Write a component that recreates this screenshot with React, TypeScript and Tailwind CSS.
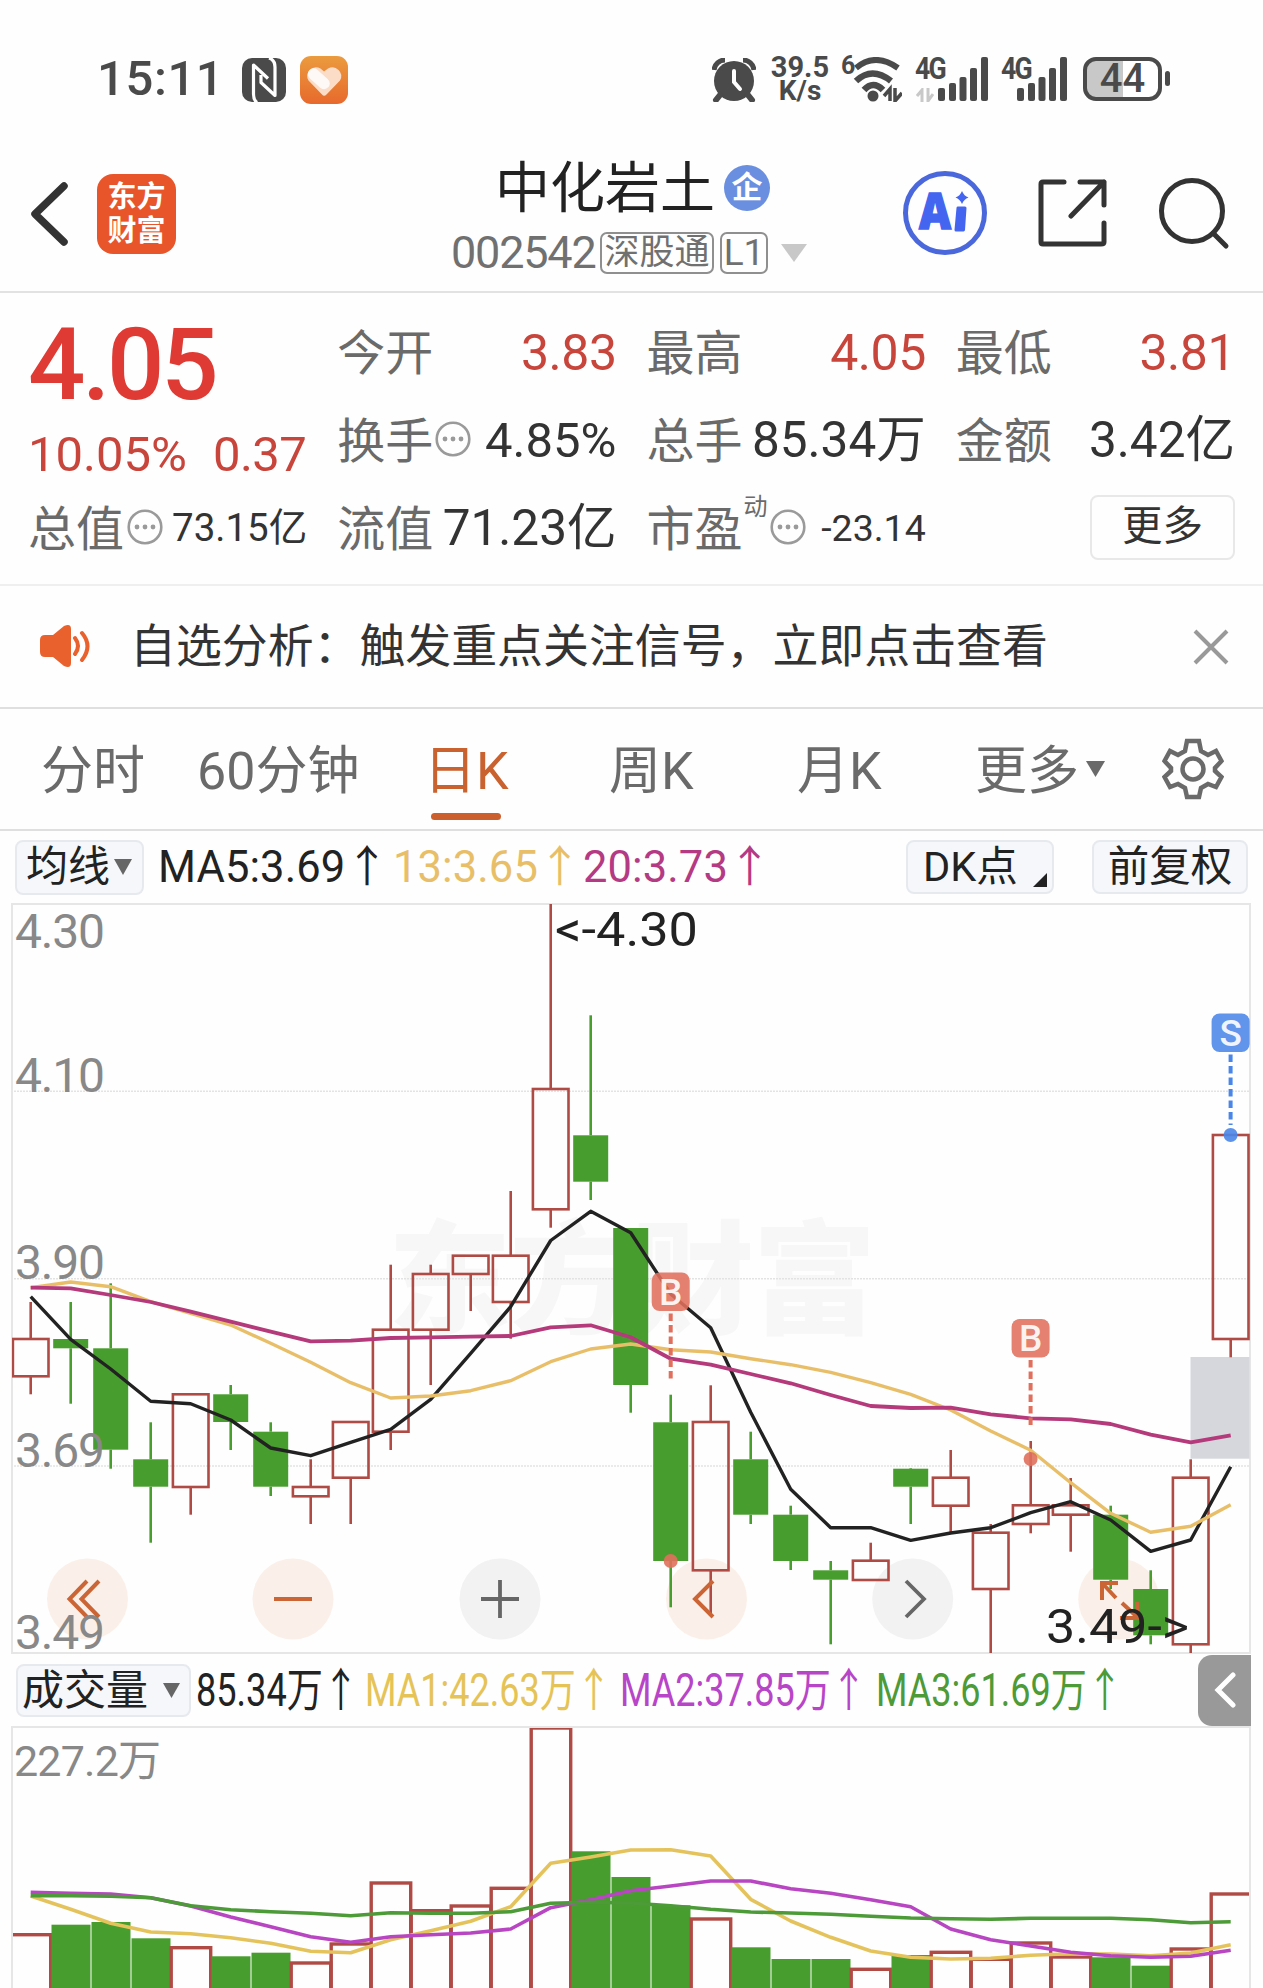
import React from 'react';

type Candle = [up: boolean, high: number, top: number, bottom: number, low: number];

const RED = '#b04a45';
const GREEN = '#479d2d';
const STEP = 40;
const X0 = 18.7;
const cx = (i: number) => X0 + i * STEP;

// Price chart starts at this page offset, all prices below are in the same scale
const K_TOP = 903;
const V_TOP = 1726;

const candles: Candle[] = [
  [true, 1302, 1339, 1376.3, 1394.3],
  [false, 1302, 1339, 1348.3, 1403.7],
  [false, 1283.3, 1348.3, 1449.7, 1468.7],
  [false, 1422.3, 1459.3, 1486.7, 1542.7],
  [true, 1394.3, 1394.3, 1487, 1514.7],
  [false, 1385, 1394.3, 1422, 1450],
  [false, 1422.3, 1431.7, 1486.7, 1496],
  [true, 1459.3, 1487, 1496.3, 1524],
  [true, 1422, 1422, 1477.7, 1524],
  [true, 1264.7, 1329.7, 1431.7, 1450],
  [true, 1264.7, 1274, 1329.7, 1385],
  [true, 1255.7, 1255.7, 1274, 1311],
  [true, 1191, 1255.7, 1302, 1338.7],
  [true, 904, 1089, 1209.3, 1227.7],
  [false, 1015.3, 1135.3, 1181.7, 1200],
  [false, 1228, 1228, 1385, 1412.7],
  [false, 1394.7, 1422.3, 1561, 1607.3],
  [true, 1385.3, 1422, 1570.3, 1616],
  [false, 1431.7, 1459.3, 1514.7, 1524],
  [false, 1505.7, 1514.7, 1561, 1570],
  [false, 1561, 1570.3, 1579.7, 1644.3],
  [true, 1542.7, 1560.7, 1580, 1580],
  [false, 1468, 1468.7, 1486.7, 1524],
  [true, 1450, 1477.7, 1505.7, 1532.3],
  [true, 1524, 1532.7, 1589, 1653],
  [true, 1441, 1505.3, 1524, 1533.3],
  [true, 1478, 1505.3, 1514.7, 1551.7],
  [false, 1505.7, 1514.7, 1579.7, 1589],
  [false, 1570.3, 1589, 1635.3, 1644.3],
  [true, 1459.3, 1477.7, 1644.3, 1653],
  [true, 1135, 1135, 1339, 1357.3],
];

const ma5 = [
  1296.7, 1339.3, 1369, 1401.3, 1403.7, 1420, 1448, 1455.7, 1442.3, 1429.3, 1399.3, 1353.3, 1306.7, 1240.5, 1211.3, 1232.7,
  1294, 1327.7, 1412.3, 1489.3, 1527.7, 1527.7, 1540.3, 1533, 1527.7, 1512.7, 1501.7, 1520, 1551.3, 1540, 1466.7,
];
const ma13 = [
  1287.7, 1282, 1286.7, 1301.7, 1313.3, 1325, 1343.3, 1362.3, 1382.7, 1398, 1396, 1390.7, 1380.7, 1361.7, 1349, 1344,
  1349.7, 1352, 1358.7, 1364.7, 1372.3, 1382.7, 1394.3, 1410, 1431, 1450.3, 1482.7, 1513.3, 1532.3, 1526.3, 1504.7,
];
const ma20 = [
  1287.7, 1288.3, 1295, 1302, 1311.7, 1321.7, 1331.7, 1341.3, 1340.7, 1338, 1337.3, 1336.7, 1336, 1327.3, 1325.3, 1337.3,
  1358.7, 1364.7, 1374, 1383.3, 1395, 1406, 1408, 1407.7, 1414.3, 1418.3, 1419.3, 1424, 1434.7, 1442.3, 1435.3,
];

const volumes = [
  1934.7, 1924.7, 1922, 1938.3, 1947.7, 1956.3, 1952.7, 1963, 1944, 1883, 1910.7, 1906, 1888.3, 1728, 1851.3, 1877, 1905.3,
  1919, 1947.3, 1959, 1959, 1969.3, 1955, 1952.3, 1959.3, 1943, 1957, 1957.3, 1965.7, 1949, 1894,
];
const volMa1 = [
  1896, 1909.3, 1923.3, 1932, 1933.7, 1937.7, 1943.3, 1951.3, 1952.7, 1939.7, 1930.7, 1921.3, 1906.7, 1863.3, 1857, 1850,
  1849.7, 1856, 1899.3, 1921, 1937.3, 1951, 1957.3, 1959, 1958.3, 1955.3, 1953.7, 1954, 1955.7, 1953, 1944.7,
];
const volMa2 = [
  1892.3, 1893.3, 1894, 1897.7, 1906, 1917, 1926.7, 1936.7, 1942.3, 1936.7, 1934.7, 1933, 1929, 1907.7, 1899.7, 1890.7,
  1886, 1881, 1881, 1888.7, 1893.3, 1899.7, 1906.7, 1929, 1939.7, 1946, 1952.3, 1955.7, 1957.3, 1956.3, 1950.3,
];
const volMa3 = [
  1895.7, 1895.7, 1896.3, 1897.7, 1905.7, 1909.7, 1911.7, 1913.3, 1915.7, 1912.7, 1913.3, 1913.3, 1911.7, 1903.3, 1902.3,
  1903, 1905.7, 1909.3, 1912, 1913, 1914.3, 1916.3, 1918, 1918.7, 1919.3, 1918.3, 1918.3, 1918.3, 1919.7, 1922.7, 1921.7,
];

const line = (ys: number[], top: number) => ys.map((y, i) => `${cx(i)},${(y - top).toFixed(1)}`).join(' ');

const SignalBars = () => (
  <svg width="50" height="44" viewBox="0 0 50 44" fill="#4a4a4a">
    <rect x="0" y="31" width="7" height="13" rx="2" />
    <rect x="11" y="26" width="7" height="18" rx="2" />
    <rect x="21.5" y="20" width="7" height="24" rx="2" />
    <rect x="32" y="11" width="7" height="33" rx="2" />
    <rect x="43" y="0" width="7" height="44" rx="2" />
  </svg>
);

const StatusBar = () => (
  <div className="flex h-[120px] items-start pt-[56px] text-[#4a4a4a]">
    <span className="ml-[97px] w-[145px] text-[49px] font-medium leading-[45px] tracking-[0.6px]">15:11</span>
    <svg className="mt-[2px]" width="44" height="44" viewBox="0 0 44 44">
      <rect width="44" height="44" rx="10" fill="#4a4a4a" />
      <g fill="none" stroke="#fff" strokeWidth="3.2" strokeLinejoin="round">
        <path d="M15 44.500 Q11.500 42 11.500 36 V7 L26 20.500" />
        <path d="M27 0 Q33 2 33 9 V37.500 L19 24.500 V17" />
      </g>
    </svg>
    <svg className="ml-[14px]" width="48" height="48" viewBox="0 0 48 48">
      <defs>
        <linearGradient id="health" x1="0" y1="0" x2="0" y2="1">
          <stop offset="0" stopColor="#eb9b3e" />
          <stop offset="1" stopColor="#e7692c" />
        </linearGradient>
      </defs>
      <rect width="48" height="48" rx="11" fill="url(#health)" />
      <path
        d="M22 38.500 L8.500 24.500 A8.800 8.800 0 0 1 20.500 12.500 L24 15.500 L28 12.500 A8.800 8.800 0 0 1 40 24.500 L26.500 38.500 Q24 41 22 38.500 Z"
        fill="#fbdcc6"
      />
      <path d="M13.500 18 L24 27.500" stroke="#fff" strokeWidth="11.500" strokeLinecap="round" opacity=".85" />
    </svg>

    {/* right side indicators */}
    <svg className="ml-[364px] mt-[2px]" width="44" height="44" viewBox="0 0 44 44">
      <circle cx="22" cy="23" r="20" fill="#4a4a4a" />
      <path d="M2 12 A11 11 0 0 1 13 2 M42 12 A11 11 0 0 0 31 2" fill="none" stroke="#4a4a4a" strokeWidth="5" />
      <path d="M8 37 L4 42 M36 37 L40 42" stroke="#4a4a4a" strokeWidth="6" strokeLinecap="round" />
      <path d="M22 13 V24 L28 31" fill="none" stroke="#fff" strokeWidth="4" strokeLinecap="round" />
    </svg>
    <div className="ml-[13px] flex w-[62px] flex-col items-center text-[29px] font-bold leading-[23px]">
      <span>39.5</span>
      <span className="text-[28px]">K/s</span>
    </div>
    <span className="ml-[10px] w-[12px] text-[25px] font-bold leading-[19px]">6</span>
    <svg className="mt-[1px]" width="49" height="45" viewBox="0 0 49 45">
      <g fill="none" stroke="#4a4a4a" strokeWidth="6">
        <path d="M3 11 Q22 -5 45 11" />
        <path d="M3 24 Q19 9 38 24" strokeWidth="6.5" />
        <path d="M11 33 Q20 23 30 33" strokeWidth="6.5" />
      </g>
      <circle cx="20" cy="39" r="5.5" fill="#4a4a4a" />
      <path d="M37 44 V32 L31 39 M42 31 V44 L49 36" fill="none" stroke="#4a4a4a" strokeWidth="3.5" />
    </svg>
    <div className="relative ml-[13px] mt-[1px] flex w-[73px] justify-end">
      <span className="absolute left-0 top-0 text-[31px] font-bold leading-[24px] tracking-[-2px] origin-left scale-x-[0.860]">4G</span>
      <svg className="absolute left-[1px] top-[31px]" width="18" height="14" viewBox="0 0 18 14">
        <path d="M6 14 V2 L1 8 M12 0 V13 L17 6" fill="none" stroke="#c8c8c8" strokeWidth="3" />
      </svg>
      <SignalBars />
    </div>
    <div className="relative ml-[13px] mt-[1px] flex w-[66px] justify-end">
      <span className="absolute left-0 top-0 text-[31px] font-bold leading-[24px] tracking-[-2px] origin-left scale-x-[0.860]">4G</span>
      <SignalBars />
    </div>
    <div className="ml-[16px] mt-[1px] flex h-[44px] w-[79px] items-center justify-center rounded-[13px] border-4 border-[#4a4a4a] bg-linear-to-r from-[#c8c8c8] from-50% to-white to-50% text-[40px] font-medium leading-none">
      44
    </div>
    <div className="ml-[3px] mt-[15px] h-[15px] w-[5px] rounded-full bg-[#4a4a4a]" />
  </div>
);

const Header = () => (
  <header className="flex h-[173px] items-start border-b-2 border-[#e2e2e2]">
    <svg className="ml-[29px] mt-[61px]" width="40" height="66" viewBox="0 0 40 66">
      <path d="M35 5 L6 33 L35 61" fill="none" stroke="#333" strokeWidth="7.500" strokeLinecap="round" strokeLinejoin="round" />
    </svg>
    <div className="ml-[28px] mt-[54px] flex h-[80px] w-[79px] flex-col items-center justify-center rounded-[16px] bg-[#e9552a] text-[29px] font-bold leading-[34px] text-white">
      <span>东方</span>
      <span>财富</span>
    </div>
    <div className="ml-[275px] mt-[38px] w-[362px]">
      <div className="flex items-center">
        <span className="ml-[44px] text-[55px] leading-[60px] text-[#222]">中化岩土</span>
        <span className="mb-[1px] ml-[9px] flex h-[46px] w-[46px] items-center justify-center rounded-full bg-[#6a8fe0] text-[31px] font-bold leading-none text-white">
          企
        </span>
      </div>
      <div className="mt-[12px] flex items-center leading-none text-[#707070]">
        <span className="w-[149px] text-[45px] tracking-[-1.200px]">002542</span>
        <span className="flex h-[42px] w-[114px] items-center justify-center rounded-[7px] border-2 border-[#8f8f8f] text-[35px]">深股通</span>
        <span className="ml-[6px] flex h-[42px] w-[48px] items-center justify-center rounded-[7px] border-2 border-[#8f8f8f] text-[37px]">L1</span>
        <svg className="ml-[13px]" width="26" height="18" viewBox="0 0 26 18">
          <path d="M0 0 H26 L13 18 Z" fill="#c8c8c8" />
        </svg>
      </div>
    </div>
    <div className="relative ml-[90px] mt-[51px] flex h-[84px] w-[84px] items-center justify-center rounded-full border-[5px] border-[#4a68dc]">
      <svg width="74" height="74" viewBox="0 0 74 74">
        <text x="11" y="53" fontFamily="Open Sans" fontSize="49" fontWeight="800" fill="#4465f0" stroke="#4465f0" strokeWidth="1.500" textLength="32" lengthAdjust="spacingAndGlyphs">
          A
        </text>
        <path d="M50 32 H57 L55.500 54 H48 Z" fill="#4465f0" stroke="#4465f0" strokeWidth="3" strokeLinejoin="round" />
        <path d="M54 15 Q56 20 60.500 21.500 Q56 23 54 28 Q52 23 47.500 21.500 Q52 20 54 15Z" fill="#4465f0" />
      </svg>
    </div>
    <svg className="ml-[50px] mt-[58px]" width="70" height="70" viewBox="0 0 70 70" fill="none" stroke="#333" strokeWidth="5" strokeLinecap="round" strokeLinejoin="round">
      <path d="M27 4 H6 Q4 4 4 6 V64 Q4 66 6 66 H64 Q67 66 67 64 V45" />
      <path d="M43 4 H67 V27 M67 4 L34 38" />
    </svg>
    <svg className="ml-[51px] mt-[57px]" width="74" height="74" viewBox="0 0 74 74" fill="none" stroke="#333" strokeWidth="5" strokeLinecap="round">
      <circle cx="34" cy="34" r="30.500" />
      <path d="M55 56 L68 69" />
    </svg>
  </header>
);

const Dots = ({ className = '' }: { className?: string }) => (
  <svg className={className} width="36" height="36" viewBox="0 0 36 36">
    <circle cx="18" cy="18" r="16.300" fill="none" stroke="#9a9a9a" strokeWidth="2.600" />
    <g fill="#9a9a9a">
      <circle cx="10" cy="18" r="2.400" />
      <circle cx="18" cy="18" r="2.400" />
      <circle cx="26" cy="18" r="2.400" />
    </g>
  </svg>
);

const Label = ({ children }: { children: React.ReactNode }) => <span className="pt-[5px] text-[48px] text-[#6a6a6a]">{children}</span>;

const Quote = () => (
  <section className="grid h-[293px] grid-cols-4 grid-rows-[repeat(3,88px)] gap-x-[30px] border-b-2 border-[#efefef] pl-[28px] pr-[28px] pt-[14px] leading-none whitespace-nowrap text-[#333]">
    <div className="row-span-2 text-[#c8453c]">
      <div className="mt-[8px] text-[101px] font-medium leading-[100px] tracking-[-3.200px] text-[#df3a33]">4.05</div>
      <div className="mt-[15px] flex justify-between pr-[1px] text-[49px]">
        <span>10.05%</span>
        <span className="tracking-[-0.600px]">0.37</span>
      </div>
    </div>
    <div className="flex items-center justify-between">
      <Label>今开</Label>
      <span className="pt-[3px] text-[50px] tracking-[-0.500px] text-[#c8453c]">3.83</span>
    </div>
    <div className="flex items-center justify-between">
      <Label>最高</Label>
      <span className="pt-[3px] text-[50px] tracking-[-0.500px] text-[#c8453c]">4.05</span>
    </div>
    <div className="flex items-center justify-between">
      <Label>最低</Label>
      <span className="pt-[3px] text-[50px] tracking-[-0.500px] text-[#c8453c]">3.81</span>
    </div>
    <div className="flex items-center">
      <Label>换手</Label>
      <Dots className="ml-[2px]" />
      <span className="ml-auto pt-[3px] text-[49px]">4.85%</span>
    </div>
    <div className="flex items-center justify-between">
      <Label>总手</Label>
      <span className="pt-[4px] text-[49.500px]">85.34万</span>
    </div>
    <div className="flex items-center justify-between">
      <Label>金额</Label>
      <span className="pt-[4px] text-[49.500px]">3.42亿</span>
    </div>
    <div className="flex items-center">
      <Label>总值</Label>
      <Dots className="ml-[3px]" />
      <span className="ml-auto pt-[3px] text-[38.500px]">73.15亿</span>
    </div>
    <div className="flex items-center justify-between">
      <Label>流值</Label>
      <span className="pt-[3px] text-[49.500px]">71.23亿</span>
    </div>
    <div className="flex items-center">
      <Label>市盈</Label>
      <span className="mb-[40px] ml-[1px] text-[24px] text-[#6a6a6a]">动</span>
      <Dots className="ml-[2px]" />
      <span className="ml-auto pt-[3px] text-[37.500px]">-23.14</span>
    </div>
    <div className="flex items-center justify-end">
      <button className="h-[65px] w-[145px] rounded-[8px] border-2 border-[#e8e8e8] pb-[1px] text-[40.500px]">更多</button>
    </div>
  </section>
);

const Notice = () => (
  <div className="flex h-[123px] items-center border-b-2 border-[#dfdfdf] text-[#333]">
    <svg className="ml-[39px] mb-[2px]" width="53" height="44" viewBox="0 0 53 44">
      <path d="M1 16 Q1 11 6 11 H14 L25 2 Q32 -1 32 5 V39 Q32 45 25 42 L14 33 H6 Q1 33 1 28 Z" fill="#e9622e" />
      <path d="M36 14 Q42 22 36 30 M43 9 Q54 22 43 36" fill="none" stroke="#e9622e" strokeWidth="4" strokeLinecap="round" />
    </svg>
    <span className="ml-[38px] text-[45.900px] leading-none whitespace-nowrap">自选分析：触发重点关注信号，立即点击查看</span>
    <svg className="ml-auto mr-[34px]" width="36" height="36" viewBox="0 0 36 36">
      <path d="M2 2 L34 34 M34 2 L2 34" stroke="#999" strokeWidth="4" />
    </svg>
  </div>
);

const Tabs = () => (
  <nav className="flex h-[122px] items-center border-b-2 border-[#dfdfdf] text-[52px] leading-none whitespace-nowrap text-[#6a6a6a]">
    <span className="ml-[41px] w-[156px] pt-[5px]">分时</span>
    <span className="w-[227px] pt-[5px]">60分钟</span>
    <span className="relative w-[185px] pt-[5px] text-[#c9622f]">
      日K
      <i className="absolute left-[7px] top-[72px] h-[7px] w-[70px] rounded-full bg-[#cc5f2e]" />
    </span>
    <span className="w-[188px] pt-[5px]">周K</span>
    <span className="w-[178px] pt-[5px]">月K</span>
    <span className="w-[111px] pt-[5px]">更多</span>
    <svg width="19" height="16" viewBox="0 0 19 16">
      <path d="M0 0 H19 L9.500 16 Z" fill="#6a6a6a" />
    </svg>
    <svg className="ml-[57px]" width="62" height="62" viewBox="0 0 62 62" fill="none" stroke="#6a6a6a" strokeWidth="4.500">
      <path d="M25 3 H37 L39 13 L46 17 L54 13 L59.500 23 L53 30 V33 L59.500 39 L54 49 L46 46 L39 50 L37 59 H25 L23 50 L16 46 L8 49 L2.500 39 L9 33 V30 L2.500 23 L8 13 L16 17 L23 13 Z" />
      <circle cx="31" cy="31" r="10.500" />
    </svg>
  </nav>
);

const btn = 'flex items-center rounded-[8px] border-2 border-[#e6e9ee] bg-[#f5f7fa] text-[#222]';

const MaRow = () => (
  <div className="flex h-[72px] items-center leading-none whitespace-nowrap">
    <div className={`${btn} ml-[15px] h-[55px] w-[129px] pl-[9px] text-[42px]`}>
      均线
      <svg className="ml-[4px]" width="18" height="16" viewBox="0 0 18 16">
        <path d="M0 0 H18 L9 16 Z" fill="#666" />
      </svg>
    </div>
    <span className="ml-[14px] w-[235px] pt-[2px] text-[43.500px] tracking-[0.100px] text-[#222]">MA5:3.69↑</span>
    <span className="w-[190px] pt-[2px] text-[43.500px] tracking-[0.100px] text-[#e8bf68]">13:3.65↑</span>
    <span className="pt-[2px] text-[43.500px] tracking-[0.100px] text-[#b53a84]">20:3.73↑</span>
    <div className={`${btn} relative ml-auto h-[54px] w-[148px] pl-[15px] text-[41.500px]`}>
      DK点
      <svg className="absolute bottom-[5px] right-[5px]" width="14" height="14" viewBox="0 0 14 14">
        <path d="M14 0 V14 H0 Z" fill="#222" />
      </svg>
    </div>
    <div className={`${btn} ml-[38px] mr-[15px] h-[54px] w-[156px] justify-center text-[41.500px]`}>前复权</div>
  </div>
);

const Marker = ({ x, y, letter, color, dashTo, dotY }: { x: number; y: number; letter: string; color: string; dashTo: number; dotY: number }) => (
  <g>
    <path d={`M${x} ${y + 41} V${dashTo}`} stroke={color} strokeWidth="4" strokeDasharray="7.500 4" />
    <rect x={x - 19} y={y} width="38" height="38.500" rx="8" fill={color} fillOpacity=".88" />
    <text x={x} y={y + 32} textAnchor="middle" fill="#fff" fillOpacity=".92" fontSize="37" fontWeight="500">
      {letter}
    </text>
    <circle cx={x} cy={dotY} r="7" fill={color} fillOpacity=".9" />
  </g>
);

const KChart = () => (
  <div className="relative ml-[11px] h-[751px] w-[1240px] border-2 border-[#e6e6e6]">
    <svg className="absolute -left-[1px] -top-[2px]" width="1239" height="752" viewBox="0 0 1239 752">
      <text x="376" y="421" fontSize="123" fontWeight="900" fill="#f7f7f7" textLength="488">
        东方财富
      </text>
      {[188.300, 375.700, 563].map((y) => (
        <path key={y} d={`M2 ${y} H1237`} stroke="#e3e3e3" strokeWidth="1.500" strokeDasharray="2 1" />
      ))}
      <rect x="1178.500" y={1357 - K_TOP} width="59" height="101.700" fill="#d5d7dd" />
      {[75.500, 281, 488, 694.500, 900.700, 1106.700].map((x, i) => (
        <circle key={x} cx={x} cy="696" r="40.500" fill={i === 2 || i === 4 ? '#f2f2f2' : '#fbf0e9'} />
      ))}

      {candles.map(([up, high, top, bottom, low], i) => {
        const color = up ? RED : GREEN;
        return (
          <g key={i} transform={`translate(0 ${-K_TOP})`} stroke={color} strokeWidth="2.600">
            {high < top && <path d={`M${cx(i)} ${high} V${top}`} />}
            {low > bottom && <path d={`M${cx(i)} ${bottom} V${low}`} />}
            {up ? (
              <rect x={cx(i) - 17.800} y={top} width="35.600" height={bottom - top} fill="none" />
            ) : (
              <rect x={cx(i) - 17.500} y={top} width="35" height={bottom - top} fill={GREEN} stroke="none" />
            )}
          </g>
        );
      })}

      <g fill="none" strokeWidth="3.400" strokeLinejoin="round">
        <polyline points={line(ma5, K_TOP)} stroke="#222" />
        <polyline points={line(ma13, K_TOP)} stroke="#e8bf68" />
        <polyline points={line(ma20, K_TOP)} stroke="#b53a7c" strokeWidth="3.800" />
      </g>

      <Marker x={658.700} y={369.500} letter="B" color="#e0705d" dashTo={478} dotY={658} />
      <Marker x={1018.600} y={416} letter="B" color="#e0705d" dashTo={525} dotY={556} />
      <Marker x={1218.600} y={110.500} letter="S" color="#4a86e8" dashTo={222} dotY={232} />

      {/* zoom and pan controls */}
      <g fill="none" stroke="#cc6535" strokeWidth="4">
        <path d="M75 678 L57.500 696 L75 714 M87 678 L69.500 696 L87 714" />
        <path d="M262 696 H300" />
        <path d="M701 678 L683 696 L701 714" />
        <path d="M1090 697 V680 H1106 M1091 681 L1104 695 M1110 700 L1124 713 M1108 715 H1125 V699" />
      </g>
      <g fill="none" stroke="#666" strokeWidth="3.800">
        <path d="M469 696 H507 M488 677 V715" />
        <path d="M894 678 L912 696 L894 714" />
      </g>

      <g fill="#888" fontSize="48">
        <text x="3" y="45" textLength="90">4.30</text>
        <text x="3" y="189" textLength="90">4.10</text>
        <text x="3" y="375.500" textLength="90">3.90</text>
        <text x="3" y="564" textLength="90">3.69</text>
        <text x="3" y="746" textLength="90">3.49</text>
      </g>
      <g fill="#222" fontSize="47.500">
        <text x="543" y="42.500" textLength="143" lengthAdjust="spacingAndGlyphs">&lt;-4.30</text>
        <text x="1034" y="740" textLength="143" lengthAdjust="spacingAndGlyphs">3.49-&gt;</text>
      </g>
    </svg>
  </div>
);

const VolumeRow = () => (
  <div className="flex h-[72px] items-center text-[46px] leading-none whitespace-nowrap">
    <div className={`${btn} ml-[16px] h-[53px] w-[175px] pl-[4px] pt-[1px] text-[42px]`}>
      成交量
      <svg className="ml-[15px]" width="17" height="15" viewBox="0 0 17 15">
        <path d="M0 0 H17 L8.500 15 Z" fill="#666" />
      </svg>
    </div>
    <span className="ml-[5px] w-[169px] origin-left scale-x-[0.785] text-[#222]">85.34万↑</span>
    <span className="w-[255px] origin-left scale-x-[0.783] text-[#e5c356]">MA1:42.63万↑</span>
    <span className="w-[256px] origin-left scale-x-[0.783] text-[#b845c8]">MA2:37.85万↑</span>
    <span className="w-[255px] origin-left scale-x-[0.783] text-[#4c9a38]">MA3:61.69万↑</span>
    <div className="ml-auto mr-[12px] flex h-[71px] w-[53px] items-center justify-center rounded-l-[14px] bg-[#999]">
      <svg width="22" height="36" viewBox="0 0 22 36">
        <path d="M19 3 L4 18 L19 33" fill="none" stroke="#fff" strokeWidth="5" strokeLinecap="round" />
      </svg>
    </div>
  </div>
);

const VolumeChart = () => (
  <div className="relative ml-[11px] h-[262px] w-[1240px] overflow-hidden border-2 border-b-0 border-[#e6e6e6]">
    <svg className="absolute -left-[1px] -top-[2px]" width="1239" height="262" viewBox="0 0 1239 262">
      <text x="2" y="50" fontSize="43" fill="#888" textLength="147">
        227.2万
      </text>
      {volumes.map((v, i) => {
        const y = v - V_TOP;
        return candles[i][0] ? (
          <rect key={i} x={cx(i) - 19.500} y={y} width="39.500" height="280" fill="none" stroke={RED} strokeWidth="3.400" />
        ) : (
          <rect key={i} x={cx(i) - 19.200} y={y} width="39" height="280" fill={GREEN} />
        );
      })}
      <g fill="none" strokeWidth="3.600" strokeLinejoin="round">
        <polyline points={line(volMa1, V_TOP)} stroke="#e5c35c" />
        <polyline points={line(volMa2, V_TOP)} stroke="#b845c2" />
        <polyline points={line(volMa3, V_TOP)} stroke="#4c9a38" />
      </g>
    </svg>
  </div>
);

export default function App() {
  return (
    <div className="h-[1988px] w-[1263px] overflow-hidden bg-[#fefefe] font-[Roboto,'Noto_Sans_CJK_SC',sans-serif]">
      <StatusBar />
      <Header />
      <Quote />
      <Notice />
      <Tabs />
      <MaRow />
      <KChart />
      <VolumeRow />
      <VolumeChart />
    </div>
  );
}
